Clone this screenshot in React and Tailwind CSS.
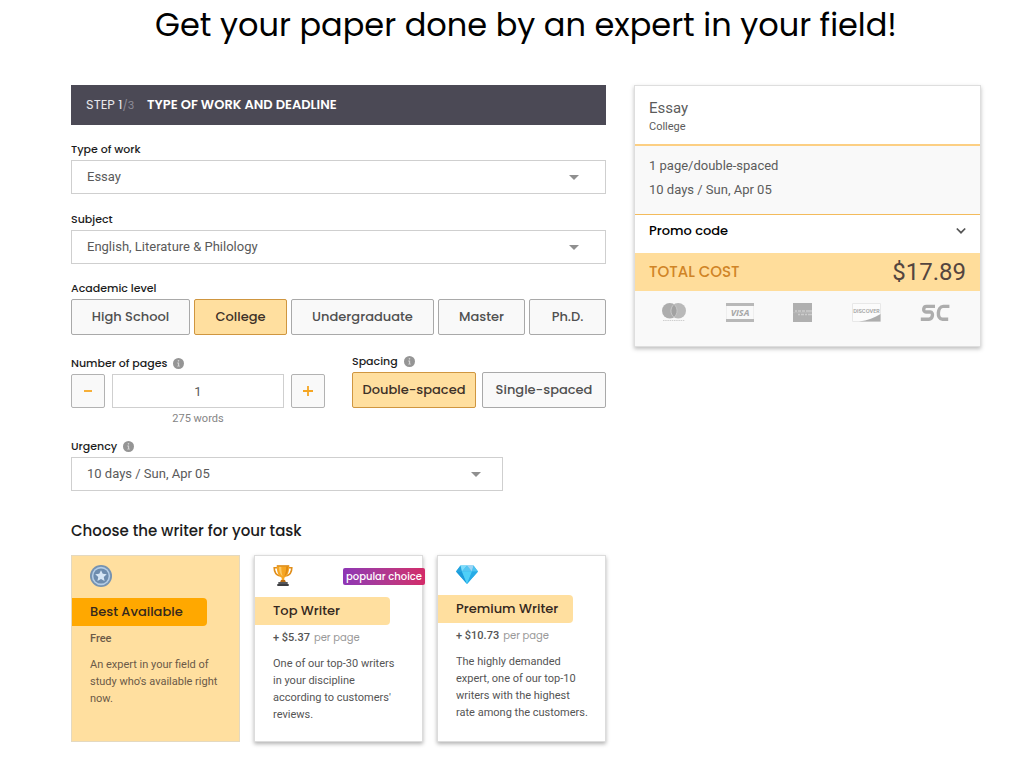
import { useState } from "react";

const HEADING = "font-['Poppins','Inter',sans-serif]";

function InfoIcon() {
  return (
    <svg viewBox="0 0 12 12" className="h-[11px] w-[11px]" aria-hidden="true">
      <circle cx="6" cy="6" r="6" fill="#959595" />
      <path d="M6 2.2a.9.9 0 1 1 0 1.8.9.9 0 0 1 0-1.8ZM4.6 5h2.1v3.4h.8v.9H4.6v-.9h.8V5.9h-.8Z" fill="#d4d4d4" />
    </svg>
  );
}

function FieldLabel({ htmlFor, id, info, children }) {
  const Tag = htmlFor ? "label" : "span";
  return (
    <div className={`${HEADING} mb-0.5 flex items-center gap-1.5 text-[11px] leading-[18px] font-medium text-[#1c1c1c]`}>
      <Tag htmlFor={htmlFor} id={id}>{children}</Tag>
      {info && <InfoIcon />}
    </div>
  );
}

function SelectBox({ id, options, arrow }) {
  return (
    <div className="relative">
      <select
        id={id}
        className="block h-[34px] w-full appearance-none border border-[#cfcfcf] bg-white pr-10 pl-[15px] text-[13px] text-[#5a5a5a] outline-none"
      >
        {options.map((o) => (
          <option key={o}>{o}</option>
        ))}
      </select>
      <svg viewBox="0 0 10 5" className={`pointer-events-none absolute top-[15px] ${arrow} h-[5px] w-[10px]`} aria-hidden="true">
        <path d="M0 0h10L5 5Z" fill="#8f8f8f" />
      </svg>
    </div>
  );
}

function Choice({ selected, onClick, children }) {
  const tone = selected
    ? "border-[#cf9640] bg-[#ffdf9f] text-[#3d3128]"
    : "border-[#a9a9a9] bg-[#f9f9f9] text-[#505050]";
  return (
    <button
      type="button"
      aria-pressed={selected}
      onClick={onClick}
      className={`${HEADING} h-9 rounded-xs border text-[13px] font-medium whitespace-nowrap ${tone}`}
    >
      {children}
    </button>
  );
}

function MedalIcon() {
  return (
    <svg viewBox="0 0 24 24" className="h-[22px] w-[22px]" aria-hidden="true">
      <circle cx="12" cy="12" r="12" fill="#7592b1" />
      <circle cx="12" cy="12" r="10" fill="#b4cde6" />
      <circle cx="12" cy="12" r="8.300" fill="#6d8cae" />
      <path d="m12 5.6 1.9 4 4.4.5-3.3 3 .9 4.3-3.9-2.2-3.9 2.2.9-4.3-3.3-3 4.4-.5Z" fill="#d6e6f5" />
    </svg>
  );
}

function TrophyIcon() {
  return (
    <svg viewBox="0 0 20 21" className="h-[21px] w-5" aria-hidden="true">
      <path d="M4.5 2.8H1.2c0 4.2 1.4 7 5.6 8.2M15.500 2.800h3.300c0 4.200-1.400 7-5.600 8.200" fill="none" stroke="#e08e1b" strokeWidth="1.6" />
      <path d="M3.800.6h12.400c.2 5.800-1.400 10.600-4.900 12.200v2.800H8.700v-2.800C5.200 11.200 3.600 6.400 3.800.6Z" fill="#f6a623" />
      <path d="M6 1.800h2.300c0 4 .4 6.800 1.400 9.600C7 9.600 6 6 6 1.800Z" fill="#fdc964" />
      <path d="M13.200 1.400h2c0 4.600-1.200 8.400-4 10.400 1.400-3 2-6.400 2-10.400Z" fill="#df8a14" />
      <path d="M3.800.3h12.400v1.200H3.800Z" fill="#d98a1d" />
      <path d="M8 15h4l.8 2H7.200Z" fill="#b96b12" />
      <path d="M5.300 17h9.400v2H5.300Z" fill="#55565a" />
      <path d="M4.300 19h11.400v2H4.300Z" fill="#3c3d41" />
    </svg>
  );
}

function DiamondIcon() {
  return (
    <svg viewBox="0 0 22 19" className="h-[19px] w-[22px]" aria-hidden="true">
      <path d="M4.500.5h13L22 6.500 11 19 0 6.500Z" fill="#35b9ee" />
      <path d="M4.500.5 0 6.500h6Z" fill="#25a3de" />
      <path d="M4.500.5H11L6 6.500Z" fill="#7fdcfa" />
      <path d="M11 .5 6 6.500h10Z" fill="#55c6f2" />
      <path d="M11 .5h6.500L16 6.500Z" fill="#9fd4f4" />
      <path d="M17.500.5 22 6.500h-6Z" fill="#4cc3f0" />
      <path d="M0 6.500h6L11 19Z" fill="#1c9bdb" />
      <path d="M6 6.500h10L11 19Z" fill="#4fd0f8" />
      <path d="M16 6.500h6L11 19Z" fill="#27abe6" />
    </svg>
  );
}

const WRITERS = [
  { name: "Best Available", price: "Free", Icon: MedalIcon, text: "An expert in your field of\nstudy who's available right\nnow." },
  { name: "Top Writer", price: "+ $5.37", unit: "per page", Icon: TrophyIcon, badge: "popular choice", text: "One of our top-30 writers\nin your discipline\naccording to customers'\nreviews." },
  { name: "Premium Writer", price: "+ $10.73", unit: "per page", Icon: DiamondIcon, text: "The highly demanded\nexpert, one of our top-10\nwriters with the highest\nrate among the customers." },
];

function WriterCard({ writer, selected, onClick }) {
  const { name, price, unit, Icon, badge, text } = writer;
  const box = selected
    ? "border-[#e4d9c0] bg-[#ffdf9f] text-[#6b5a48]"
    : "border-[#dcdcdc] bg-white text-[#555] shadow-[0_2px_4px_rgba(0,0,0,0.3)]";
  return (
    <button
      type="button"
      aria-pressed={selected}
      onClick={onClick}
      className={`relative flex min-h-[187px] flex-col items-start border pt-[9px] text-left ${box}`}
    >
      <span className="pl-[18px]"><Icon /></span>
      {badge && (
        <span className={`${HEADING} absolute top-3 -right-[3px] rounded-xs bg-linear-to-r from-[#8e35b5] to-[#d32a68] px-[3px] text-[10px] leading-[17px] font-medium text-white`}>
          {badge}
        </span>
      )}
      <span className={`${HEADING} mt-[11px] w-[135px] rounded-r pl-[18px] text-[13px] leading-7 font-medium whitespace-nowrap text-[#35281e] ${selected ? "bg-[#ffa800]" : "bg-[#ffdf9f]"}`}>
        {name}
      </span>
      <span className="mt-1 pl-[18px] text-[11px] leading-[18px]">
        <span className="font-medium">{price}</span>
        {unit && <span className={`${HEADING} ml-1 text-[10px] text-[#999]`}>{unit}</span>}
      </span>
      <span className="mt-2 pl-[18px] text-[11px] leading-[17px] whitespace-pre-line">{text}</span>
    </button>
  );
}

function PaymentIcons() {
  return (
    <div className="flex items-center justify-between pt-3 pr-[30px] pb-6 pl-[27px]">
      <svg viewBox="0 0 24 19" className="h-[19px] w-6" role="img" aria-label="Mastercard">
        <circle cx="7.800" cy="7.800" r="7.800" fill="#adadad" />
        <circle cx="16.200" cy="7.800" r="7.800" fill="#b9b9b9" />
        <path d="M12 1.400c4 3.200 4 9.600 0 12.800-4-3.200-4-9.600 0-12.800Z" fill="#a2a2a2" stroke="#d0d0d0" strokeWidth=".7" />
        <path d="M1 17.500h22" stroke="#cfcfcf" strokeDasharray="1.500 .7" />
      </svg>
      <svg viewBox="0 0 28 19" className="h-[19px] w-7" role="img" aria-label="Visa">
        <path d="M.5.500h27v18H.5Z" fill="#f9f9f9" stroke="#eeeeee" />
        <path d="M0 0h28v3H0ZM0 16h28v3H0Z" fill="#b8b8b8" />
        <text x="14" y="13" textAnchor="middle" fontFamily="Open Sans, sans-serif" fontWeight="700" fontStyle="italic" fontSize="9" fill="#a6a6a6">VISA</text>
      </svg>
      <svg viewBox="0 0 19 19" className="h-[19px] w-[19px]" role="img" aria-label="American Express">
        <path d="M0 0h19v19H0Z" fill="#b0b0b0" />
        <path d="M2 8h2M5 8h3M9 8h3M13 8h6M5 11.500h2M8 11.500h3M12 11.500h2M15 11.500h4" stroke="#cccccc" strokeWidth="1.400" />
        <path d="M0 9.700h19" stroke="#bdbdbd" strokeWidth=".8" />
      </svg>
      <svg viewBox="0 0 29 19" className="h-[19px] w-[29px]" role="img" aria-label="Discover">
        <path d="M.5.500h28v18H.5Z" fill="#fbfbfb" stroke="#e8e8e8" />
        <text x="14.500" y="9.800" textAnchor="middle" fontFamily="Inter, sans-serif" fontWeight="600" fontSize="5.200" fill="#a0a0a0">DISCOVER</text>
        <path d="M28.500 11v7.500H7C15.500 17.400 23 14.800 28.500 11Z" fill="#adadad" />
      </svg>
      <svg viewBox="0 0 30 18" className="h-[18px] w-[30px]" role="img" aria-label="SC">
        <path d="M15 2.400H6.400C3.200 2.400 2.600 8 6 8h4.400c3.200 0 2.600 7.200-1.400 7.200H.8M29.400 2.400h-6.200c-5.800 0-6.800 12.800-.8 12.800h5.800" fill="none" stroke="#adadad" strokeWidth="3.400" />
      </svg>
    </div>
  );
}

const LEVELS = ["High School", "College", "Undergraduate", "Master", "Ph.D."];
const SPACINGS = ["Double-spaced", "Single-spaced"];

export default function App() {
  const [level, setLevel] = useState("College");
  const [spacing, setSpacing] = useState("Double-spaced");
  const [writer, setWriter] = useState("Best Available");
  const [pages, setPages] = useState(1);
  const step = "h-[34px] w-[34px] shrink-0 rounded-xs border border-[#b2b2b2] bg-[#f9f9f9] flex items-center justify-center";

  return (
    <main className="min-h-screen bg-white pr-[43px] pb-4 pl-[71px] font-['Roboto',sans-serif]">
      <h1 className={`${HEADING} pt-px text-center text-[32px] leading-[48px] font-normal text-black`}>
        Get your paper done by an expert in your field!
      </h1>

      <div className="mt-9 grid grid-cols-[535fr_347fr] items-start gap-7">
        <form onSubmit={(e) => e.preventDefault()}>
          <h2 className={`${HEADING} flex h-10 items-center bg-[#4b4955] pl-[15px] text-[13px] text-white`}>
            <span className="w-[61px] font-normal text-[#e6e6ea]">
              STEP 1<span className="text-[11px] text-[#8d8b96]">/3</span>
            </span>
            <span className="font-semibold">TYPE OF WORK AND DEADLINE</span>
          </h2>

          <div className="mt-[15px]">
            <FieldLabel htmlFor="work">Type of work</FieldLabel>
            <SelectBox id="work" arrow="right-[27px]" options={["Essay", "Research paper", "Coursework"]} />
          </div>
          <div className="mt-4">
            <FieldLabel htmlFor="subject">Subject</FieldLabel>
            <SelectBox id="subject" arrow="right-[27px]" options={["English, Literature & Philology", "History", "Business"]} />
          </div>
          <div className="mt-[15px]">
            <FieldLabel id="level-label">Academic level</FieldLabel>
            <div role="group" aria-labelledby="level-label" className="grid grid-cols-[119fr_93fr_143fr_87fr_77fr] gap-1">
              {LEVELS.map((l) => (
                <Choice key={l} selected={level === l} onClick={() => setLevel(l)}>{l}</Choice>
              ))}
            </div>
          </div>

          <div className="mt-[17px] grid grid-cols-2 items-end gap-x-[27px]">
            <div>
              <FieldLabel htmlFor="pages" info>Number of pages</FieldLabel>
              <div className="flex gap-[7px]">
                <button type="button" aria-label="Fewer pages" className={step} onClick={() => setPages(Math.max(1, pages - 1))}>
                  <svg viewBox="0 0 10 10" className="h-[10px] w-[10px]"><path d="M1 5h8" stroke="#f5a623" strokeWidth="1.800" /></svg>
                </button>
                <input
                  id="pages"
                  value={pages}
                  onChange={(e) => setPages(Number(e.target.value) || 1)}
                  className="h-[34px] w-full min-w-0 border border-[#cfcfcf] bg-white text-center text-[13px] text-[#5a5a5a] outline-none"
                />
                <button type="button" aria-label="More pages" className={step} onClick={() => setPages(pages + 1)}>
                  <svg viewBox="0 0 10 10" className="h-[10px] w-[10px]"><path d="M0 5h10M5 0v10" stroke="#f5a623" strokeWidth="1.800" /></svg>
                </button>
              </div>
            </div>
            <div>
              <FieldLabel id="spacing-label" info>Spacing</FieldLabel>
              <div role="group" aria-labelledby="spacing-label" className="grid grid-cols-2 gap-1.5">
                {SPACINGS.map((s) => (
                  <Choice key={s} selected={spacing === s} onClick={() => setSpacing(s)}>{s}</Choice>
                ))}
              </div>
            </div>
            <p className="mt-0.5 text-center text-[11px] leading-[18px] text-[#858585]">{pages * 275} words</p>
          </div>

          <div className="mt-[9px] w-[432px] max-w-full">
            <FieldLabel htmlFor="urgency" info>Urgency</FieldLabel>
            <SelectBox id="urgency" arrow="right-[22px]" options={["10 days / Sun, Apr 05", "7 days / Thu, Apr 02", "3 days / Sun, Mar 29"]} />
          </div>

          <h3 id="writer-label" className={`${HEADING} mt-7 text-[15px] leading-6 font-medium text-[#1c1c1c]`}>
            Choose the writer for your task
          </h3>
          <div role="group" aria-labelledby="writer-label" className="mt-3 grid grid-cols-3 gap-3.5">
            {WRITERS.map((w) => (
              <WriterCard key={w.name} writer={w} selected={writer === w.name} onClick={() => setWriter(w.name)} />
            ))}
          </div>
        </form>

        <aside className="border border-[#dedede] bg-[#f9f9f9] text-[#5c5c5c] shadow-[0_2px_4px_rgba(0,0,0,0.25)]">
          <div className="border-b-2 border-[#fccf83] bg-white px-3.5 pt-3 pb-2">
            <p className="text-[15px] leading-5">Essay</p>
            <p className="text-[11px] leading-[18px]">College</p>
          </div>
          <div className="border-b border-[#f3bb5c] px-3.5 pt-2 pb-3 text-[13px] leading-6">
            <p>1 page/double-spaced</p>
            <p>10 days / Sun, Apr 05</p>
          </div>
          <button type="button" className={`${HEADING} flex w-full items-center justify-between bg-white pt-1.5 pr-3.5 pb-3 pl-3.5 text-[13px] leading-5 font-medium text-black`}>
            Promo code
            <svg viewBox="0 0 10 10" className="h-[10px] w-[10px]" aria-hidden="true">
              <path d="m.8 2.500 4.200 4.200 4.200-4.200" fill="none" stroke="#555" strokeWidth="1.700" />
            </svg>
          </button>
          <div className="flex h-[38px] items-center justify-between bg-[#ffdd9b] px-3.5">
            <span className={`${HEADING} text-[15px] font-medium text-[#d08426]`}>TOTAL COST</span>
            <span className="text-[24px] text-[#54453f]">$17.89</span>
          </div>
          <PaymentIcons />
        </aside>
      </div>
    </main>
  );
}
